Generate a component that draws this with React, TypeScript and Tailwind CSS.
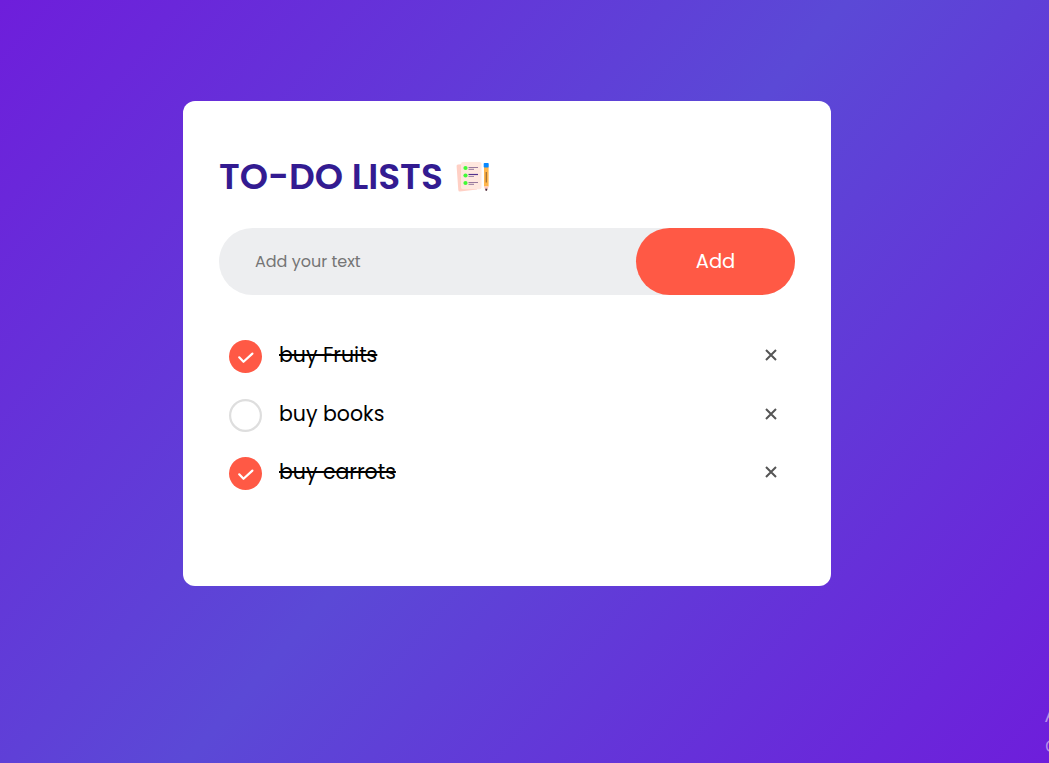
import { useState } from "react";

interface Task {
  id: number;
  text: string;
  done: boolean;
}

const initialTasks: Task[] = [
  { id: 1, text: "buy Fruits", done: true },
  { id: 2, text: "buy books", done: false },
  { id: 3, text: "buy carrots", done: true },
];

function NotesIcon() {
  return (
    <svg width="34" height="32" viewBox="0 0 34 32" className="shrink-0" aria-hidden="true">
      <path d="M2 3.5 18 2.5 21 28.500 4 30.500Q2.500 30.700 2.300 29L.6 5Q.5 3.600 2 3.500Z" fill="#ffd0c5" />
      <rect x="5" y="1" width="20.500" height="27.200" rx="2" fill="#ffe8df" />
      <circle cx="9.500" cy="7" r="2.100" fill="#41fa36" />
      <circle cx="9.500" cy="14.500" r="2.100" fill="#41fa36" />
      <circle cx="9.500" cy="22" r="2.100" fill="#41fa36" />
      <path d="M12.500 6.500h9.500M12.500 21.500h9.500" stroke="#98799c" strokeWidth="1.200" />
      <path d="M12.500 13.500h9.500" stroke="#53338d" strokeWidth="1.200" />
      <path d="M12.500 8.300h5.500M12.500 15.500h5.500M12.500 23.300h5.500" stroke="#a68ca8" strokeWidth="1.200" />
      <path d="M28 6h4.600v19.500H28z" fill="#ffb54b" />
      <path d="M29.700 11h1.200v10.500h-1.200z" fill="#9c6b35" />
      <path d="M28 25.500h4.600L31 30h-1.400z" fill="#ffc5bd" />
      <path d="M29.200 27.800h2.200l-.5 2h-1.200z" fill="#343045" />
      <rect x="27.700" y="2" width="5" height="4.500" rx=".8" fill="#0788ff" />
    </svg>
  );
}

function Marker({ done }: { done: boolean }) {
  return done ? (
    <svg width="33" height="33" viewBox="0 0 33 33" aria-hidden="true">
      <circle cx="16.500" cy="16.500" r="16.500" fill="#ff5945" />
      <path d="m10.200 17.300 4.300 4.500 8.900-8.200" fill="none" stroke="white" strokeWidth="2.200" strokeLinecap="round" strokeLinejoin="round" />
    </svg>
  ) : (
    <svg width="33" height="33" viewBox="0 0 33 33" aria-hidden="true">
      <circle cx="16.500" cy="16.500" r="15.400" fill="white" stroke="#dedede" strokeWidth="2.200" />
    </svg>
  );
}

export default function App() {
  const [tasks, setTasks] = useState(initialTasks);
  const [draft, setDraft] = useState("");

  function addTask() {
    const text = draft.trim();
    if (!text) return;
    setTasks([...tasks, { id: Date.now(), text, done: false }]);
    setDraft("");
  }

  return (
    <div className="relative h-screen overflow-hidden bg-[linear-gradient(131deg,#6e1edb,#5b49d6_49.5%,#6e1edb)] pt-[101px] pl-[183px] font-['Poppins','Inter',sans-serif]">
      <main className="h-[485px] w-[648px] rounded-xl bg-white px-9 pt-[54px]">
        <h1 className="flex h-[44px] items-center text-[36px] leading-none font-semibold whitespace-nowrap text-[#331b91]">
          <span className="w-[237px]">TO-DO LISTS</span>
          <NotesIcon />
        </h1>
        <div className="mt-[29px] flex h-[67px] rounded-full bg-[#edeef0]">
          <input
            value={draft}
            onChange={(e) => setDraft(e.target.value)}
            placeholder="Add your text"
            className="min-w-0 flex-1 bg-transparent pl-9 text-[16px] outline-none placeholder:text-[#757575]"
          />
          <button onClick={addTask} className="w-[159px] rounded-full bg-[#ff5945] text-[19.5px] text-white">
            Add
          </button>
        </div>
        <ul className="mt-[32px]">
          {tasks.map((task) => (
            <li key={task.id} className="flex h-[58.7px] items-center pr-[17px] pl-[10px]">
              <button
                onClick={() => setTasks(tasks.map((t) => (t.id === task.id ? { ...t, done: !t.done } : t)))}
                className="flex flex-1 items-center gap-[17px] text-left text-[20.5px] leading-[30px] text-black"
              >
                <Marker done={task.done} />
                <span className={task.done ? "-mt-[3px] line-through decoration-2" : "-mt-[3px]"}>{task.text}</span>
              </button>
              <button aria-label="Delete" onClick={() => setTasks(tasks.filter((t) => t.id !== task.id))} className="-mt-[3px]">
                <svg width="14" height="14" viewBox="0 0 14 14" fill="none" stroke="#555" strokeWidth="2">
                  <path d="m2 2 10 10M12 2 2 12" />
                </svg>
              </button>
            </li>
          ))}
        </ul>
      </main>
      <div className="pointer-events-none absolute top-[701px] left-[1045px] font-['Open_Sans',sans-serif] whitespace-nowrap text-white/50">
        <p className="text-[20px] leading-[27px]">Activate Windows</p>
        <p className="mt-[5px] text-[16px] leading-[26px]">Go to Settings to activate Windows.</p>
      </div>
    </div>
  );
}
